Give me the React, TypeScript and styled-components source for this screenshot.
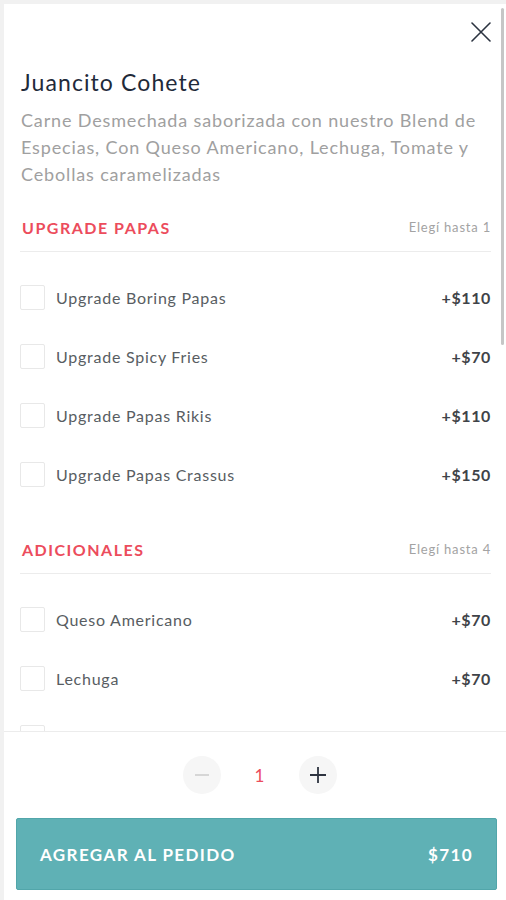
import styled, { createGlobalStyle } from 'styled-components';

const GlobalStyle = createGlobalStyle`
  html, body {
    margin: 0;
    padding: 0;
    background: #f1f1f1;
  }
  body {
    font-family: Lato, "Noto Sans", sans-serif;
    overflow: hidden;
  }
`

const StyledPanel = styled.div`
  margin: 4px 0 0 4px;
  height: 896px;
  background: #ffffff;
  display: flex;
  flex-direction: column;
  position: relative;
`
const StyledScrollThumb = styled.div`
  position: absolute;
  top: 4px;
  right: 2px;
  width: 3px;
  height: 337px;
  border-radius: 2px;
  background: #c6c6c6;
`
const StyledBody = styled.div`
  flex: 1;
  overflow: hidden;
  padding: 18px 15px 0 16px;
`
const StyledCloseRow = styled.div`
  display: flex;
  justify-content: flex-end;
`
const StyledCloseButton = styled.button`
  width: 20px;
  height: 20px;
  padding: 0;
  border: none;
  background: transparent;
  display: flex;
`
const StyledTitle = styled.h1`
  margin: 26px 0 0 1px;
  font-size: 23px;
  line-height: 28px;
  font-weight: 400;
  letter-spacing: 1.1px;
  color: #1f2a3a;
`
const StyledDescription = styled.p`
  margin: 11px 0 0 1px;
  font-size: 18px;
  line-height: 27px;
  letter-spacing: 0.85px;
  color: #a0a0a0;
`
const StyledSection = styled.section<{ $gap: number }>`
  margin-top: ${p => p.$gap}px;
`
const StyledSectionHeader = styled.div`
  display: flex;
  justify-content: space-between;
  align-items: center;
  height: 20px;
  padding: 0 0 14px 2px;
  border-bottom: 1px solid #ececec;
`
const StyledSectionTitle = styled.h2`
  margin: 0;
  font-size: 16px;
  font-weight: 700;
  letter-spacing: 1.5px;
  color: #ec4c5c;
`
const StyledLimit = styled.span`
  font-size: 13px;
  letter-spacing: 0.8px;
  color: #a3a3a3;
`
const StyledOptionList = styled.ul`
  list-style: none;
  margin: 0;
  padding: 16px 0 0 0;
`
const StyledOption = styled.li`
  display: flex;
  align-items: center;
  height: 59px;
`
const StyledCheckbox = styled.span`
  width: 23px;
  height: 23px;
  border: 1px solid #e8e8e8;
  border-radius: 2px;
  flex-shrink: 0;
`
const StyledOptionLabel = styled.span`
  flex: 1;
  margin-left: 11px;
  font-size: 16px;
  letter-spacing: 0.75px;
  color: #585d62;
`
const StyledPrice = styled.span`
  font-size: 16px;
  font-weight: 700;
  letter-spacing: 0.6px;
  color: #3f4348;
`
const StyledFooter = styled.div`
  border-top: 1px solid #ececec;
  padding: 24px 9px 10px 12px;
  display: flex;
  flex-direction: column;
  gap: 24px;
`
const StyledStepper = styled.div`
  display: flex;
  justify-content: center;
  align-items: center;
  gap: 20px;
  padding-left: 6px;
`
const StyledStepButton = styled.button`
  width: 38px;
  height: 38px;
  border-radius: 50%;
  border: none;
  background: #f6f6f6;
  padding: 0;
  display: flex;
  align-items: center;
  justify-content: center;
`
const StyledQuantity = styled.span`
  width: 38px;
  text-align: center;
  font-size: 17px;
  color: #ec4c5c;
`
const StyledAddButton = styled.button`
  height: 72px;
  border: 1px solid #52a6aa;
  border-radius: 2px;
  background: #5fb1b5;
  color: #ffffff;
  display: flex;
  justify-content: space-between;
  align-items: center;
  padding: 0 23px;
  font-family: Lato, "Noto Sans", sans-serif;
  font-size: 17px;
  font-weight: 700;
  letter-spacing: 1.4px;
`

const sections = [
  {
    title: 'UPGRADE PAPAS',
    limit: 'Elegí hasta 1',
    gap: 29,
    options: [
      ['Upgrade Boring Papas', '+$110'],
      ['Upgrade Spicy Fries', '+$70'],
      ['Upgrade Papas Rikis', '+$110'],
      ['Upgrade Papas Crassus', '+$150'],
    ],
  },
  {
    title: 'ADICIONALES',
    limit: 'Elegí hasta 4',
    gap: 35,
    options: [
      ['Queso Americano', '+$70'],
      ['Lechuga', '+$70'],
      ['Tomate', '+$70'],
    ],
  },
]

export default function App() {
  return (
    <>
      <GlobalStyle />
      <StyledPanel>
        <StyledBody>
          <StyledCloseRow>
            <StyledCloseButton aria-label="Cerrar">
              <svg width="20" height="20" viewBox="0 0 20 20">
                <path d="M1 1 L19 19 M19 1 L1 19" stroke="#2b3340" strokeWidth="1.6" strokeLinecap="round" />
              </svg>
            </StyledCloseButton>
          </StyledCloseRow>
          <StyledTitle>Juancito Cohete</StyledTitle>
          <StyledDescription>
            Carne Desmechada saborizada con nuestro Blend de Especias, Con Queso Americano, Lechuga, Tomate y Cebollas caramelizadas
          </StyledDescription>

          {sections.map(section => (
            <StyledSection key={section.title} $gap={section.gap}>
              <StyledSectionHeader>
                <StyledSectionTitle>{section.title}</StyledSectionTitle>
                <StyledLimit>{section.limit}</StyledLimit>
              </StyledSectionHeader>
              <StyledOptionList>
                {section.options.map(([label, price]) => (
                  <StyledOption key={label}>
                    <StyledCheckbox />
                    <StyledOptionLabel>{label}</StyledOptionLabel>
                    <StyledPrice>{price}</StyledPrice>
                  </StyledOption>
                ))}
              </StyledOptionList>
            </StyledSection>
          ))}
        </StyledBody>

        <StyledFooter>
          <StyledStepper>
            <StyledStepButton aria-label="Restar">
              <svg width="16" height="16" viewBox="0 0 16 16">
                <path d="M1 8 H15" stroke="#cfcfcf" strokeWidth="1.6" />
              </svg>
            </StyledStepButton>
            <StyledQuantity>1</StyledQuantity>
            <StyledStepButton aria-label="Sumar">
              <svg width="18" height="18" viewBox="0 0 18 18">
                <path d="M1 9 H17 M9 1 V17" stroke="#2e3440" strokeWidth="1.8" />
              </svg>
            </StyledStepButton>
          </StyledStepper>
          <StyledAddButton>
            <span>AGREGAR AL PEDIDO</span>
            <span>$710</span>
          </StyledAddButton>
        </StyledFooter>

        <StyledScrollThumb />
      </StyledPanel>
    </>
  )
}
